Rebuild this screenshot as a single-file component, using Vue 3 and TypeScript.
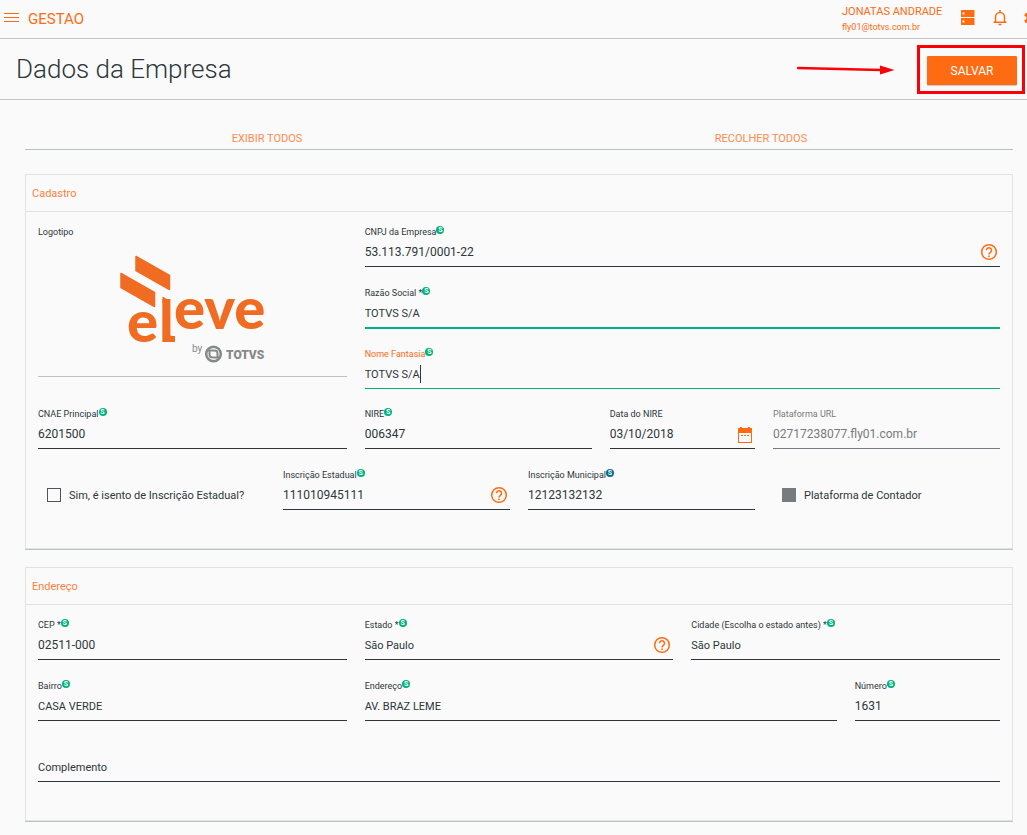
<script setup lang="ts">
import { reactive } from 'vue'

interface Field {
  id: string
  label: string
  value: string
  span: string
  badge?: 'green' | 'blue'
  icon?: 'help' | 'calendar'
  state?: 'valid' | 'focus' | 'disabled' | 'empty'
  numeric?: boolean
}

const companyFields = reactive<Field[]>([
  { id: 'cnpj', label: 'CNPJ da Empresa', value: '53.113.791/0001-22', span: 's8', badge: 'green', icon: 'help', numeric: true },
  { id: 'razao', label: 'Razão Social *', value: 'TOTVS S/A', span: 's8', badge: 'green', state: 'valid' },
  { id: 'fantasia', label: 'Nome Fantasia', value: 'TOTVS S/A', span: 's8', badge: 'green', state: 'focus' },
])

const registryFields = reactive<Field[]>([
  { id: 'cnae', label: 'CNAE Principal', value: '6201500', span: 's4', badge: 'green', numeric: true },
  { id: 'nire', label: 'NIRE', value: '006347', span: 's3', badge: 'green', numeric: true },
  { id: 'data-nire', label: 'Data do NIRE', value: '03/10/2018', span: 's2', icon: 'calendar', numeric: true },
  { id: 'url', label: 'Plataforma URL', value: '02717238077.fly01.com.br', span: 's3', state: 'disabled', numeric: true },
])

const taxFields = reactive<Field[]>([
  { id: 'ie', label: 'Inscrição Estadual', value: '111010945111', span: 's3', badge: 'green', icon: 'help', numeric: true },
  { id: 'im', label: 'Inscrição Municipal', value: '12123132132', span: 's3', badge: 'blue', numeric: true },
])

const addressFields = reactive<Field[]>([
  { id: 'cep', label: 'CEP *', value: '02511-000', span: 's4', badge: 'green', numeric: true },
  { id: 'estado', label: 'Estado *', value: 'São Paulo', span: 's4', badge: 'green', icon: 'help' },
  { id: 'cidade', label: 'Cidade (Escolha o estado antes) *', value: 'São Paulo', span: 's4', badge: 'green' },
  { id: 'bairro', label: 'Bairro', value: 'CASA VERDE', span: 's4', badge: 'green' },
  { id: 'endereco', label: 'Endereço', value: 'AV. BRAZ LEME', span: 's6', badge: 'green' },
  { id: 'numero', label: 'Número', value: '1631', span: 's2', badge: 'green', numeric: true },
  { id: 'complemento', label: 'Complemento', value: '', span: 's12', state: 'empty' },
])

const groups = { companyFields, registryFields, taxFields, addressFields }
</script>

<template>
  <div class="page">
    <header class="topbar">
      <button class="icon-btn menu" type="button" aria-label="Menu">
        <svg width="16" height="11" viewBox="0 0 16 11"><path d="M0 1.500h15M0 5.500h15M0 9.500h15" stroke="#ff6b12" fill="none" /></svg>
      </button>
      <a class="brand" href="#">GESTAO</a>
      <div class="user">
        <span class="user-name">JONATAS ANDRADE</span>
        <span class="user-mail">fly01@totvs.com.br</span>
      </div>
      <nav class="tools">
        <button class="icon-btn" type="button" aria-label="Aplicativos">
          <svg width="16" height="16" viewBox="0 0 16 16" fill="#ff6b12"><path fill-rule="evenodd" d="M1 0h13.500v7H1zM2.500 2.500v2h2v-2zM1 8h13.500v7H1zM2.500 10.500v2h2v-2z" /></svg>
        </button>
        <button class="icon-btn" type="button" aria-label="Notificações">
          <svg width="16" height="16" viewBox="0 0 16 16"><path d="M8 0v2M3.500 12V7a4.500 4.500 0 0 1 9 0v5M1.500 12.200h13" stroke="#ff6b12" stroke-width="1.500" fill="none" /><path d="M6.300 13.800h3.400a1.700 1.700 0 0 1-3.400 0z" fill="#ff6b12" /></svg>
        </button>
        <button class="icon-btn" type="button" aria-label="Configurações">
          <svg width="16" height="16" viewBox="0 0 16 16"><circle cx="8" cy="8" r="4.200" fill="none" stroke="#ff6b12" stroke-width="3" /><path d="M8 0.500v3M8 12.500v3M1 4.200l3 1.600M12 10.200l3 1.600M1 11.800l3-1.600M12 5.800l3-1.600" stroke="#ff6b12" stroke-width="3.500" /></svg>
        </button>
      </nav>
    </header>

    <div class="titlebar">
      <h1>Dados da Empresa</h1>
      <svg class="arrow" width="98" height="14" viewBox="0 0 98 14">
        <path d="M1 6 L84 8" stroke="#fb0007" stroke-width="2.500" stroke-linecap="round" />
        <path d="M83 3.500 L97.500 8 L83 12.500z" fill="#fb0007" />
      </svg>
      <div class="highlight"><button class="save" type="button">SALVAR</button></div>
    </div>

    <main>
      <nav class="toggles">
        <a href="#">EXIBIR TODOS</a>
        <a href="#">RECOLHER TODOS</a>
      </nav>

      <template v-for="section in ['Cadastro', 'Endereço']" :key="section">
        <section class="card">
          <h2>{{ section }}</h2>
          <div class="body">
            <div v-if="section === 'Cadastro'" class="grid intro">
              <div class="logo-field s4">
                <span class="label">Logotipo</span>
                <svg class="logo" width="148" height="112" viewBox="0 0 148 112" role="img" aria-label="eleve by TOTVS">
                  <g fill="#f06c23" stroke="#f06c23" stroke-width="1.500" stroke-linejoin="round">
                    <path d="M18 2.500 L51.500 21.500 V35.500 L18 16.500z" />
                    <path d="M3 19.500 L36.500 38.500 V52.500 L3 33.500z" />
                  </g>
                  <g class="logo-word" fill="#f06c23">
                    <text x="9" y="88">e</text>
                    <text x="41" y="88">l</text>
                    <text x="56" y="75">eve</text>
                  </g>
                  <path d="M44.500 42.500 L51.500 46.500 V49 H44.500z M46 80 H51.800 Q51.800 82 54 82 H57 V88 H52 Q46 88 46 82z" fill="#f06c23" />
                  <text class="logo-by" x="74" y="98">by</text>
                  <circle cx="95.500" cy="100" r="7.300" fill="none" stroke="#868989" stroke-width="2.500" />
                  <path d="M88 96.500h8.500q3 0 3 3v4.500M103 103.500h-8.500q-3 0-3-3v-3.500" fill="none" stroke="#868989" stroke-width="2" />
                  <text class="logo-totvs" x="108" y="105">TOTVS</text>
                </svg>
              </div>
              <div class="stack s8">
                <div v-for="f in groups.companyFields" :key="f.id" class="field" :class="[f.state, { numeric: f.numeric }]">
                  <label class="label" :for="f.id">{{ f.label }}<i v-if="f.badge" class="badge" :class="f.badge">S</i></label>
                  <div class="control">
                    <input :id="f.id" v-model="f.value" type="text" />
                    <span v-if="f.state === 'focus'" class="caret"></span>
                    <button v-if="f.icon === 'help'" class="icon-btn help" type="button" aria-label="Ajuda">
                      <svg width="18" height="18" viewBox="0 0 18 18"><circle cx="9" cy="9" r="7.300" fill="none" stroke="#ff6b12" stroke-width="1.500" /><path d="M6.500 7.300a2.500 2.500 0 1 1 4.100 1.900C9.700 10 9 10.300 9 11.500" fill="none" stroke="#ff6b12" stroke-width="1.500" /><path d="M8.200 12.400h1.600v1.500H8.200z" fill="#ff6b12" /></svg>
                    </button>
                  </div>
                </div>
              </div>
            </div>

            <div class="grid">
              <template v-for="(list, n) in section === 'Cadastro' ? [groups.registryFields, groups.taxFields] : [groups.addressFields]" :key="n">
                <label v-if="n === 1" class="check s3"><input type="checkbox" />Sim, é isento de Inscrição Estadual?</label>
                <div v-for="f in list" :key="f.id" class="field" :class="[f.span, f.state, { numeric: f.numeric }]">
                  <label class="label" :for="f.id">{{ f.label }}<i v-if="f.badge" class="badge" :class="f.badge">S</i></label>
                  <div class="control">
                    <input :id="f.id" v-model="f.value" type="text" :disabled="f.state === 'disabled'" />
                    <button v-if="f.icon === 'help'" class="icon-btn help" type="button" aria-label="Ajuda">
                      <svg width="18" height="18" viewBox="0 0 18 18"><circle cx="9" cy="9" r="7.300" fill="none" stroke="#ff6b12" stroke-width="1.500" /><path d="M6.500 7.300a2.500 2.500 0 1 1 4.100 1.900C9.700 10 9 10.300 9 11.500" fill="none" stroke="#ff6b12" stroke-width="1.500" /><path d="M8.200 12.400h1.600v1.500H8.200z" fill="#ff6b12" /></svg>
                    </button>
                    <button v-if="f.icon === 'calendar'" class="icon-btn help calendar" type="button" aria-label="Calendário">
                      <svg width="16" height="16" viewBox="0 0 16 16"><path fill="#ff6b12" fill-rule="evenodd" d="M1 1h2V0h2v1h6V0h2v1h2v15H1zM2 6v9h12V6z" /><path d="M4 8.500h8.500" stroke="#ff6b12" stroke-dasharray="2 1" /></svg>
                    </button>
                  </div>
                </div>
                <label v-if="n === 1" class="check s3 last"><input type="checkbox" disabled />Plataforma de Contador</label>
              </template>
            </div>
          </div>
        </section>
      </template>
    </main>
  </div>
</template>

<style>
body {
  margin: 0;
  background: #fafafa;
}
</style>

<style scoped>
.page {
  min-height: 100vh;
  overflow: hidden;
  background: #fafafa;
  color: #2c3739;
  font-family: Roboto, "Liberation Sans", sans-serif;
  font-size: 11px;
}
.page * {
  box-sizing: border-box;
}
button,
input {
  font: inherit;
  color: inherit;
}
a {
  color: inherit;
  text-decoration: none;
}
.icon-btn {
  display: flex;
  padding: 0;
  border: 0;
  background: none;
}
.topbar {
  display: flex;
  align-items: flex-start;
  height: 39px;
  padding-left: 4px;
  border-bottom: 1px solid #c3c7c8;
  color: #ff6b12;
}
.menu {
  margin-top: 12px;
}
.brand {
  margin-left: 8px;
  font-size: 15px;
  line-height: 38px;
}
.user {
  display: flex;
  flex-direction: column;
  margin: 4px 18px 0 auto;
  width: 100px;
  white-space: nowrap;
}
.user-name {
  line-height: 16px;
}
.user-mail {
  font-size: 9px;
  line-height: 14px;
}
.tools {
  display: flex;
  gap: 16px;
  margin: 10px -13px 0 0;
}
.titlebar {
  display: flex;
  align-items: center;
  height: 61px;
  padding: 0 2px 0 16px;
  border-bottom: 1px solid #c3c7c8;
}
h1 {
  flex: 1;
  margin: 0;
  font-size: 26px;
  font-weight: 300;
  line-height: 32px;
}
.arrow {
  margin-right: 22px;
}
.highlight {
  padding: 8px 5px 6px 7px;
  border: 3px solid #fb0007;
}
.save {
  display: block;
  width: 90px;
  height: 29px;
  padding: 0;
  border: 0;
  border-radius: 1px;
  background: #ff6b12;
  box-shadow: 0 1px 1px #c3c7c8;
  color: #fff;
  font-size: 12px;
  line-height: 31px;
}
main {
  padding: 26px 14px 14px 25px;
}
.toggles {
  display: grid;
  grid-template-columns: 1fr 1fr;
  height: 24px;
  border-bottom: 1px solid #b9bebf;
  color: #ff8a4d;
  line-height: 26px;
  text-align: center;
}
.toggles a {
  padding-right: 10px;
}
.card {
  margin-top: 18px;
  border: 1px solid #dfe3e3;
  box-shadow: 0 1px 0 #bcc1c2;
}
.toggles + .card {
  margin-top: 24px;
}
h2 {
  height: 37px;
  margin: 0;
  padding-left: 6px;
  border-bottom: 1px solid #dfe3e3;
  color: #ff8040;
  font-size: 11px;
  font-weight: 400;
  line-height: 38px;
}
.body {
  padding: 12px 12px 38px;
}
.grid {
  display: grid;
  grid-template-columns: repeat(12, minmax(0, 1fr));
  gap: 18px;
}
.intro {
  margin-bottom: 17px;
}
.s2 { grid-column: span 2; }
.s3 { grid-column: span 3; }
.s4 { grid-column: span 4; }
.s6 { grid-column: span 6; }
.s8 { grid-column: span 8; }
.s12 { grid-column: span 12; }
.stack {
  display: flex;
  flex-direction: column;
  gap: 18px;
}
.logo-field {
  display: flex;
  flex-direction: column;
  height: 153px;
  border-bottom: 1px solid #bcc1c2;
}
.logo {
  align-self: center;
  margin-top: 16px;
}
.logo-word {
  font-family: Lato, sans-serif;
  font-size: 58px;
  font-weight: 900;
}
.logo-by {
  fill: #868989;
  font-size: 10px;
}
.logo-totvs {
  fill: #868989;
  font-size: 12px;
  font-weight: 900;
}
.label {
  display: flex;
  height: 14px;
  font-size: 9px;
  line-height: 16px;
  white-space: nowrap;
}
.badge {
  width: 8px;
  height: 8px;
  margin-top: 2px;
  border-radius: 50%;
  color: #fff;
  font-size: 7px;
  font-style: normal;
  font-weight: 700;
  line-height: 8px;
  text-align: center;
}
.green { background: #00b27a; }
.blue { background: #006d91; }
.control {
  display: flex;
  align-items: center;
  height: 29px;
  border-bottom: 1px solid #2c3739;
}
.control input {
  flex: 1;
  min-width: 0;
  width: 100%;
  height: 28px;
  padding: 0;
  border: 0;
  outline: 0;
  background: none;
}
.numeric .control input {
  font-size: 12px;
}
.help {
  margin-right: 2px;
}
.calendar {
  margin-top: 2px;
}
.valid .control {
  border-color: #00b27a;
  box-shadow: 0 1px 0 #00b27a;
}
.focus .control {
  border-color: #00b27a;
}
.focus .label {
  color: #ff6b12;
}
.focus .control input {
  flex: none;
  width: auto;
  field-sizing: content;
}
.caret {
  width: 1px;
  height: 18px;
  background: #2c3739;
}
.disabled {
  color: #767b7d;
}
.disabled .control {
  border-color: #767b7d;
}
.empty {
  display: flex;
  align-items: flex-end;
  border-bottom: 1px solid #2c3739;
}
.empty .label {
  height: 28px;
  font-size: 11px;
  line-height: 30px;
}
.empty .control {
  flex: 1;
  margin-top: 14px;
  height: 28px;
  border: 0;
}
.check {
  display: flex;
  align-items: center;
  height: 28px;
  margin-top: 14px;
  padding-left: 9px;
  white-space: nowrap;
}
.check input {
  appearance: none;
  width: 14px;
  height: 14px;
  margin: 0 8px 0 0;
  border: 1px solid #4f5658;
}
.check input:disabled {
  border-color: #767b7d;
  background: #767b7d;
}
</style>
